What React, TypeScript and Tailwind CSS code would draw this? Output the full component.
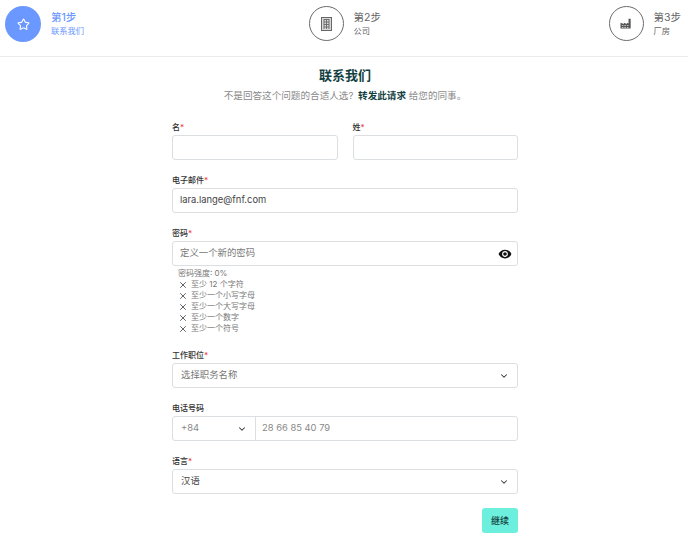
import React from 'react';
import { Star, X, ChevronDown } from 'lucide-react';

const font = "font-['Inter','Noto_Sans_CJK_SC',sans-serif]";

const BuildingIcon = () => (
  <svg width="11" height="14" viewBox="0 0 11 14" fill="none">
    <rect x="0.5" y="0.5" width="10" height="13" fill="#d9d9d9" stroke="#666" />
    <path d="M3 2.5h5M3 5h5M3 7.5h5M3 10h5M3 2v10M5.5 2v10M8 2v10" stroke="#666" strokeWidth="0.9" />
  </svg>
);

const FactoryIcon = () => (
  <svg width="12" height="11" viewBox="0 0 14 13" fill="#555">
    <path d="M0.5 5.5 4.5 7V5.5L8 7V5.5l2 1V1h2.5v11.5H0.5z" />
    <path d="M2 8.5h2v1H2zM5 8.5h2v1H5zM8 8.5h2v1H8zM2 10.5h2v1H2zM5 10.5h2v1H5zM8 10.5h2v1H8z" fill="#ddd" />
  </svg>
);

const EyeIcon = () => (
  <svg width="14" height="14" viewBox="0 0 24 24" fill="#111">
    <path d="M12 4.5C7 4.5 2.73 7.61 1 12c1.73 4.39 6 7.5 11 7.5s9.27-3.11 11-7.5c-1.73-4.39-6-7.5-11-7.5zM12 17c-2.76 0-5-2.24-5-5s2.24-5 5-5 5 2.24 5 5-2.24 5-5 5zm0-8c-1.66 0-3 1.34-3 3s1.34 3 3 3 3-1.34 3-3-1.34-3-3-3z" />
  </svg>
);

const Step = ({ icon, title, sub, active, className }: { icon: React.ReactNode; title: string; sub: string; active?: boolean; className?: string }) => (
  <div className={'flex items-center gap-[10px] ' + (className || '')}>
    <div
      className={
        active
          ? 'w-[36px] h-[36px] rounded-full bg-[#6b98ff] flex items-center justify-center text-white'
          : 'w-[35px] h-[35px] rounded-full border border-[#6b6b6b] flex items-center justify-center'
      }
    >
      {icon}
    </div>
    <div className="flex flex-col">
      <span className={active ? 'text-[10.5px] leading-[15px] font-medium text-[#6b98ff]' : 'text-[10.5px] leading-[15px] text-[#666]'}>{title}</span>
      <span className={active ? 'text-[8.25px] leading-[13px] text-[#6b98ff]' : 'text-[8.25px] leading-[13px] text-[#666]'}>{sub}</span>
    </div>
  </div>
);

const Label = ({ text, required }: { text: string; required?: boolean }) => (
  <div className="text-[8px] leading-[12px] font-medium text-[#333] mb-[2px]">
    {text}
    {required && <span className="text-[#f03a3a]">*</span>}
  </div>
);

const Box = ({ children, className }: { children?: React.ReactNode; className?: string }) => (
  <div className={'h-[25px] border border-[#dcdfe1] rounded-[3px] bg-white flex items-center text-[9.4px] ' + (className || '')}>{children}</div>
);

const rules = ['至少 12 个字符', '至少一个小写字母', '至少一个大写字母', '至少一个数字', '至少一个符号'];

export default function App() {
  return (
    <div className={`w-[688px] h-[538px] overflow-hidden bg-white ${font}`}>
      {/* Stepper */}
      <header className="h-[57px] border-b border-[#ececec] pl-[5px] pr-[7px] pt-[6px] flex items-start justify-between">
        <Step active icon={<Star size={13} />} title="第1步" sub="联系我们" />
        <Step className="mr-[3px]" icon={<BuildingIcon />} title="第2步" sub="公司" />
        <Step icon={<FactoryIcon />} title="第3步" sub="厂房" />
      </header>

      <main className="w-[346px] ml-[172px]">
        <h1 className="mt-[9px] text-center text-[13px] leading-[18px] font-bold text-[#123f3f]">联系我们</h1>
        <p className="mt-[5px] text-center text-[9.6px] leading-[14px] text-[#8a8a8a]">
          不是回答这个问题的合适人选? <span className="ml-[2px] font-bold text-[#123f3f]">转发此请求</span> 给您的同事。
        </p>

        <div className="mt-[18px] grid grid-cols-2 gap-[15px]">
          <div>
            <Label text="名" required />
            <Box />
          </div>
          <div>
            <Label text="姓" required />
            <Box />
          </div>
        </div>

        <div className="mt-[14px]">
          <Label text="电子邮件" required />
          <Box className="px-[7px] text-[#444]">lara.lange@fnf.com</Box>
        </div>

        <div className="mt-[14px]">
          <Label text="密码" required />
          <Box className="pl-[7px] pr-[5px] justify-between text-[#777]">
            定义一个新的密码
            <EyeIcon />
          </Box>
          <div className="mt-[2px] pl-[6px] text-[8px] leading-[11px] text-[#777]">
            <div>密码强度: 0%</div>
            {rules.map((r) => (
              <div key={r} className="flex items-center gap-[3px]">
                <X size={10} className="text-[#444]" />
                {r}
              </div>
            ))}
          </div>
        </div>

        <div className="mt-[15px]">
          <Label text="工作职位" required />
          <Box className="px-[8px] justify-between text-[#777]">
            选择职务名称
            <ChevronDown size={10} strokeWidth={2.5} className="text-[#333]" />
          </Box>
        </div>

        <div className="mt-[14px]">
          <Label text="电话号码" />
          <Box className="text-[#888]">
            <div className="w-[83px] h-full px-[8px] flex items-center justify-between border-r border-[#dcdfe1]">
              +84
              <ChevronDown size={10} strokeWidth={2.5} className="text-[#333]" />
            </div>
            <span className="pl-[6px]">28 66 85 40 79</span>
          </Box>
        </div>

        <div className="mt-[14px]">
          <Label text="语言" required />
          <Box className="px-[8px] justify-between text-[#444]">
            汉语
            <ChevronDown size={10} strokeWidth={2.5} className="text-[#333]" />
          </Box>
        </div>

        <div className="mt-[14px] flex justify-end">
          <button className="w-[36px] h-[25px] rounded-[3px] bg-[#6cefdc] text-[9px] font-medium text-[#123f3f]">继续</button>
        </div>
      </main>
    </div>
  );
}
